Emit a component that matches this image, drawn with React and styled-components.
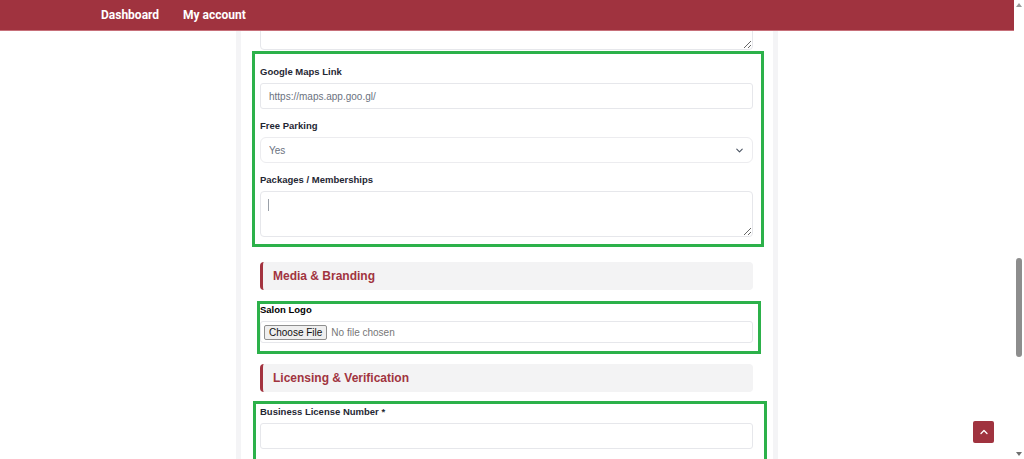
import React from "react";
import styled, { createGlobalStyle } from "styled-components";
import { ChevronDown, ChevronUp } from "lucide-react";

const GlobalStyle = createGlobalStyle`
  * { box-sizing: border-box; }
  html, body { margin: 0; padding: 0; background: #fff; }
  body { font-family: "Liberation Sans", Arial, sans-serif; overflow: hidden; }
`;

function App() {
  return (
    <Page>
      <GlobalStyle />
      <Main>
        <Header>
          <NavLink>Dashboard</NavLink>
          <NavLink>My account</NavLink>
        </Header>
        <Scroller>
          <Container>
            <PrevTextarea readOnly />

            <Group $top={-14} $left={-8} $right={-11} $bottom={-10}>
              <Field>
                <Label>Google Maps Link</Label>
                <Input placeholder="https://maps.app.goo.gl/" />
              </Field>
              <Field>
                <Label>Free Parking</Label>
                <SelectWrap>
                  <Select defaultValue="yes">
                    <option value="yes">Yes</option>
                    <option value="no">No</option>
                  </Select>
                  <Chevron>
                    <ChevronDown size={11} strokeWidth={2.4} />
                  </Chevron>
                </SelectWrap>
              </Field>
              <Field>
                <Label>Packages / Memberships</Label>
                <TextareaWrap>
                  <Textarea />
                  <Caret />
                </TextareaWrap>
              </Field>
            </Group>

            <SectionTitle $gap={25}>Media &amp; Branding</SectionTitle>

            <Group $top={-2} $left={-3} $right={-8} $bottom={-11}>
              <Field>
                <Label $dark>Salon Logo</Label>
                <FileBox>
                  <FileInput type="file" />
                </FileBox>
              </Field>
            </Group>

            <SectionTitle $gap={21}>Licensing &amp; Verification</SectionTitle>

            <Group $top={-4} $left={-7} $right={-14} $bottom={-14}>
              <Field>
                <Label>Business License Number *</Label>
                <Input />
              </Field>
            </Group>
          </Container>
        </Scroller>
        <ScrollTop aria-label="Back to top">
          <ChevronUp size={12} strokeWidth={2.6} />
        </ScrollTop>
      </Main>
      <ScrollTrack>
        <Arrow $up />
        <TrackSpace>
          <Thumb />
        </TrackSpace>
        <Arrow />
      </ScrollTrack>
    </Page>
  );
}

export default App;

const Page = styled.div`
  display: flex;
  width: 1024px;
  height: 459px;
  overflow: hidden;
`;

const Main = styled.div`
  position: relative;
  flex: 1;
  display: flex;
  flex-direction: column;
  min-width: 0;
`;

const Header = styled.div`
  height: 31px;
  flex-shrink: 0;
  display: flex;
  align-items: center;
  gap: 24px;
  padding-left: 101px;
  padding-bottom: 1px;
  background-color: #a0333f;
  border-bottom: 1px solid #c7707a;
  position: relative;
  z-index: 2;
`;

const NavLink = styled.a`
  color: #fff;
  font-family: Roboto, "Liberation Sans", sans-serif;
  font-weight: 700;
  font-size: 12px;
  cursor: pointer;
`;

const Scroller = styled.div`
  flex: 1;
  overflow: hidden;
`;

const Container = styled.div`
  width: 542px;
  margin: 0 auto;
  min-height: 100%;
  display: flex;
  flex-direction: column;
  padding: 0 20px 40px 19px;
  border-left: 5px solid #f4f4f6;
  border-right: 5px solid #f4f4f6;
  background: #fff;
`;

const PrevTextarea = styled.textarea`
  display: block;
  height: 40px;
  margin-top: -21px;
  border: 1px solid #e6e7eb;
  border-radius: 4px;
  resize: vertical;
  outline: none;
  font: inherit;
`;

const Group = styled.div`
  position: relative;
  display: flex;
  flex-direction: column;
  gap: 10px;
  margin-top: 15px;

  &::after {
    content: "";
    position: absolute;
    top: ${(p) => p.$top}px;
    left: ${(p) => p.$left}px;
    right: ${(p) => p.$right}px;
    bottom: ${(p) => p.$bottom}px;
    border: 3px solid #2cb14a;
    pointer-events: none;
  }
`;

const Field = styled.div`
  display: flex;
  flex-direction: column;
  gap: 4px;
`;

const Label = styled.label`
  font-size: 9.5px;
  font-weight: 700;
  line-height: 14px;
  color: ${(p) => (p.$dark ? "#000" : "#1f2733")};
`;

const Input = styled.input`
  height: 26px;
  padding: 0 8px;
  border: 1px solid #e6e7eb;
  border-radius: 3px;
  font-family: "Liberation Sans", Arial, sans-serif;
  font-size: 10px;
  color: #333;
  outline: none;

  &::placeholder {
    color: #6b7280;
  }
`;

const SelectWrap = styled.div`
  position: relative;
`;

const Select = styled.select`
  appearance: none;
  width: 100%;
  height: 26px;
  padding: 0 8px;
  border: 1px solid #ececef;
  border-radius: 6px;
  background: #fff;
  font-family: "Liberation Sans", Arial, sans-serif;
  font-size: 10px;
  color: #6b7280;
  outline: none;
`;

const Chevron = styled.span`
  position: absolute;
  right: 8px;
  top: 8px;
  display: flex;
  color: #4b5563;
  pointer-events: none;
`;

const TextareaWrap = styled.div`
  position: relative;
  display: flex;
`;

const Textarea = styled.textarea`
  flex: 1;
  height: 46px;
  border: 1px solid #e6e7eb;
  border-radius: 4px;
  resize: vertical;
  outline: none;
  font: inherit;
`;

const Caret = styled.span`
  position: absolute;
  left: 8px;
  top: 8px;
  width: 1px;
  height: 12px;
  background: #9aa0a8;
`;

const SectionTitle = styled.h3`
  margin: ${(p) => p.$gap}px 0 0;
  height: 28px;
  display: flex;
  align-items: center;
  padding-left: 10px;
  background: #f3f3f4;
  border-left: 3px solid #a3333f;
  border-radius: 4px;
  color: #a1343f;
  font-size: 12px;
  font-weight: 700;

  & + ${Group} {
    margin-top: 13px;
  }
`;

const FileBox = styled.div`
  height: 22px;
  display: flex;
  align-items: center;
  padding: 0 3px;
  border: 1px solid #e6e7eb;
  border-radius: 3px;
`;

const FileInput = styled.input`
  font-family: "Liberation Sans", Arial, sans-serif;
  font-size: 10px;
  color: #777;

  &::file-selector-button {
    font-family: "Liberation Sans", Arial, sans-serif;
    font-size: 10px;
    color: #111;
    height: 15px;
    padding: 0 4px;
    margin-right: 4px;
    border: 1px solid #8f8f8f;
    border-radius: 2px;
    background: #efefef;
  }
`;

const ScrollTop = styled.button`
  position: absolute;
  right: 20px;
  bottom: 16px;
  width: 21px;
  height: 22px;
  padding: 0;
  display: flex;
  align-items: center;
  justify-content: center;
  border: none;
  border-radius: 2px;
  background: #a0333f;
  color: #fff;
`;

const ScrollTrack = styled.div`
  width: 10px;
  display: flex;
  flex-direction: column;
  align-items: center;
  background: #fff;
`;

const TrackSpace = styled.div`
  flex: 1;
  width: 100%;
  display: flex;
  justify-content: center;
  padding-top: 248px;
`;

const Thumb = styled.div`
  width: 6px;
  height: 99px;
  border-radius: 3px;
  background: #8d8d8d;
`;

const Arrow = styled.div`
  width: 0;
  height: 0;
  margin: 3px 0;
  border-left: 3px solid transparent;
  border-right: 3px solid transparent;
  ${(p) =>
    p.$up
      ? "border-bottom: 4px solid #9a9a9a;"
      : "border-top: 4px solid #6f6f6f;"}
`;
